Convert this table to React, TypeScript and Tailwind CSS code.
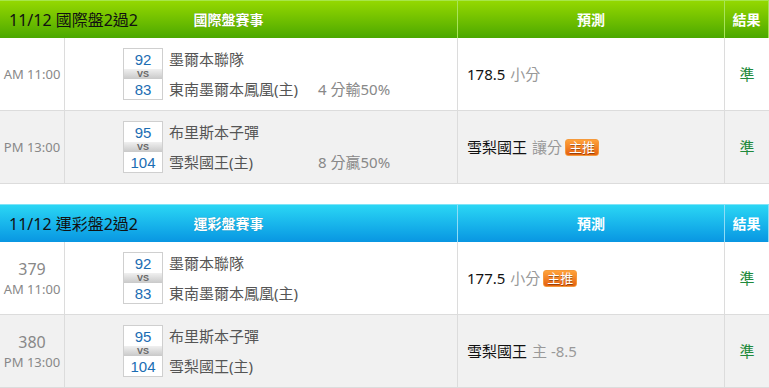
import React from "react"

type Game = {
  no?: string
  time: string
  home: [string, string]
  away: [string, string]
  diff?: string
  pick: string
  pickNote: string
  hot?: boolean
  bg: string
}

const font = "font-['Noto_Sans','Noto_Sans_CJK_TC',sans-serif]"

const tables: {
  title: string
  heading: string
  theme: "green" | "blue"
  games: Game[]
}[] = [
  {
    title: "11/12 國際盤2過2",
    heading: "國際盤賽事",
    theme: "green",
    games: [
      {
        time: "AM 11:00",
        home: ["92", "墨爾本聯隊"],
        away: ["83", "東南墨爾本鳳凰(主)"],
        diff: "4 分輸50%",
        pick: "178.5",
        pickNote: "小分",
        bg: "bg-white",
      },
      {
        time: "PM 13:00",
        home: ["95", "布里斯本子彈"],
        away: ["104", "雪梨國王(主)"],
        diff: "8 分贏50%",
        pick: "雪梨國王",
        pickNote: "讓分",
        hot: true,
        bg: "bg-[#f1f1f1]",
      },
    ],
  },
  {
    title: "11/12 運彩盤2過2",
    heading: "運彩盤賽事",
    theme: "blue",
    games: [
      {
        no: "379",
        time: "AM 11:00",
        home: ["92", "墨爾本聯隊"],
        away: ["83", "東南墨爾本鳳凰(主)"],
        pick: "177.5",
        pickNote: "小分",
        hot: true,
        bg: "bg-white",
      },
      {
        no: "380",
        time: "PM 13:00",
        home: ["95", "布里斯本子彈"],
        away: ["104", "雪梨國王(主)"],
        pick: "雪梨國王",
        pickNote: "主 -8.5",
        bg: "bg-[#f1f1f1]",
      },
    ],
  },
]

function HotBadge() {
  return (
    <span className="ml-[3px] inline-flex h-[17px] items-center rounded-[3px] border border-[#f59a3c] bg-gradient-to-b from-[#ffa23a] to-[#e4600e] px-[3px] text-[13px] leading-none text-white [text-shadow:0_1px_0_rgba(0,0,0,0.35)]">
      主推
    </span>
  )
}

function ScoreBox({ top, bottom }: { top: string; bottom: string }) {
  return (
    <div className="flex w-[40px] flex-col border border-[#cfcfcf] bg-white font-['Liberation_Sans',sans-serif]">
      <div className="flex h-[20px] items-center justify-center text-[15px] leading-none text-[#1b6db3]">{top}</div>
      <div className="flex h-[10px] items-center justify-center bg-gradient-to-b from-[#f0f0f0] to-[#c9c9c9] text-[9px] font-bold leading-none text-[#666]">
        VS
      </div>
      <div className="flex h-[20px] items-center justify-center text-[15px] leading-none text-[#1b6db3]">{bottom}</div>
    </div>
  )
}

function GameRow({ g }: { g: Game }) {
  return (
    <div className={`grid h-[73px] grid-cols-[65px_393px_267px_44px] border-b border-[#dcdcdc] ${g.bg}`}>
      <div className="flex flex-col items-center justify-center gap-[6px] border-r border-[#dcdcdc] text-[#888]">
        {g.no && <span className="text-[16px] leading-none">{g.no}</span>}
        <span className="text-[13px] leading-none">{g.time}</span>
      </div>
      <div className="flex items-center border-r border-[#dcdcdc] pl-[58px]">
        <ScoreBox top={g.home[0]} bottom={g.away[0]} />
        <div className="ml-[6px] flex h-[52px] w-[149px] flex-col justify-between py-[1px] text-[15px] leading-[20px] text-[#555]">
          <span>{g.home[1]}</span>
          <span>{g.away[1]}</span>
        </div>
        {g.diff && (
          <div className="flex h-[52px] items-end py-[1px] text-[15px] leading-[20px] text-[#888]">{g.diff}</div>
        )}
      </div>
      <div className="flex items-center border-r border-[#dcdcdc] pl-[9px] text-[15px]">
        <span className="text-[#111]">{g.pick}</span>
        <span className="ml-[5px] text-[#999]">{g.pickNote}</span>
        {g.hot && <HotBadge />}
      </div>
      <div className="flex items-center justify-center text-[15px] text-[#1f8a3c]">準</div>
    </div>
  )
}

export default function App() {
  return (
    <div className={`w-[769px] bg-white ${font}`}>
      {tables.map((t, i) => {
        const head =
          t.theme === "green"
            ? "from-[#94d800] to-[#4aa800] border-t-[#a6e64a]"
            : "from-[#2bd6f4] to-[#0996e2] border-t-[#7fe4f8]"
        const line = t.theme === "green" ? "border-[#a8e45a]" : "border-[#8fdcf6]"
        return (
          <div key={i} className={i > 0 ? "mt-[20px]" : ""}>
            <div className={`grid h-[38px] grid-cols-[458px_267px_44px] border-t bg-gradient-to-b ${head}`}>
              <div className={`grid grid-cols-[1fr_auto_1fr] items-center border-r ${line}`}>
                <span className="whitespace-nowrap pl-[9px] text-[16px] text-[#111]">{t.title}</span>
                <span className="text-[14px] font-bold text-white [text-shadow:0_0_1px_rgba(0,0,0,0.3)]">{t.heading}</span>
                <span />
              </div>
              <div className={`flex items-center justify-center border-r ${line} text-[14px] font-bold text-white`}>
                預測
              </div>
              <div className={`flex items-center justify-center border-r ${line} text-[14px] font-bold text-white`}>
                結果
              </div>
            </div>
            {t.games.map((g, j) => (
              <GameRow key={j} g={g} />
            ))}
          </div>
        )
      })}
    </div>
  )
}
